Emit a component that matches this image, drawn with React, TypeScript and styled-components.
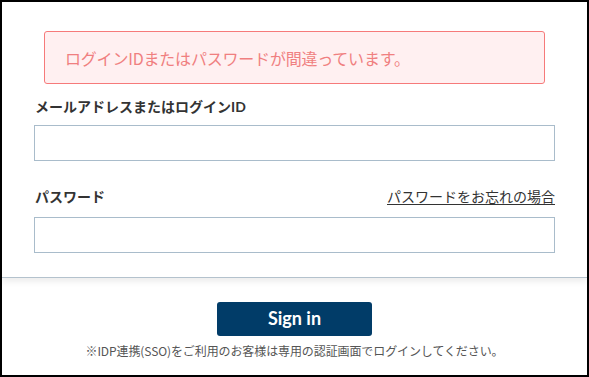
import React, { useState } from 'react';
import styled, { createGlobalStyle } from 'styled-components';

const GlobalStyle = createGlobalStyle`
  html, body {
    margin: 0;
    padding: 0;
    background: #ffffff;
  }
  body {
    font-family: Lato, "Noto Sans CJK JP", sans-serif;
    color: #333333;
  }
  * {
    box-sizing: border-box;
  }
`;

const Frame = styled.div`
  width: 589px;
  height: 377px;
  border: 2px solid #000000;
  display: flex;
  flex-direction: column;
  background: #ffffff;
  overflow: hidden;
`;

const FormSection = styled.section`
  padding: 29px 32px 24px 32px;
  border-bottom: 1px solid #b4c2cd;
  box-shadow: 0 4px 6px rgba(0, 0, 0, 0.07);
  position: relative;
  z-index: 1;
`;

const Alert = styled.div`
  margin: 0 10px;
  height: 53px;
  border: 1px solid #f67a7a;
  border-radius: 3px;
  background-color: #fff0f1;
  color: #f07f80;
  font-family: "Noto Sans CJK JP", sans-serif;
  font-size: 16px;
  display: flex;
  align-items: center;
  padding: 0 20px;
  letter-spacing: -0.2px;
`;

const LabelRow = styled.div<{ $top: number; $bottom: number }>`
  display: flex;
  justify-content: space-between;
  align-items: center;
  height: 20px;
  margin-top: ${(p) => p.$top}px;
  margin-bottom: ${(p) => p.$bottom}px;
`;

const Label = styled.label`
  font-family: Lato, "Noto Sans CJK JP", sans-serif;
  font-weight: 700;
  font-size: 14px;
  color: #333333;
  padding-left: 1px;
`;

const ForgotLink = styled.a`
  font-family: "Noto Sans CJK JP", sans-serif;
  font-size: 14px;
  color: #333333;
  text-decoration: underline;
  text-underline-offset: 2px;
`;

const Input = styled.input`
  display: block;
  width: 100%;
  height: 36px;
  border: 1px solid #a9bccb;
  border-radius: 0;
  padding: 0 10px;
  font-size: 14px;
  outline: none;
  background: #ffffff;
`;

const Footer = styled.footer`
  flex: 1;
  display: flex;
  flex-direction: column;
  align-items: center;
  padding-top: 24px;
`;

const SignInButton = styled.button`
  width: 155px;
  height: 34px;
  border: none;
  border-radius: 3px;
  background-color: #013c68;
  color: #ffffff;
  font-family: Lato, "Open Sans", sans-serif;
  font-weight: 700;
  font-size: 18px;
  cursor: pointer;
  display: flex;
  align-items: center;
  justify-content: center;
  padding: 0 0 2px 0;
`;

const Note = styled.p`
  margin: 5px 0 0 0;
  font-family: "Noto Sans CJK JP", sans-serif;
  font-size: 12px;
  line-height: 20px;
  color: #555555;
  letter-spacing: -0.1px;
`;

const App = () => {
  const [loginId, setLoginId] = useState('');
  const [password, setPassword] = useState('');

  return (
    <>
      <GlobalStyle />
      <Frame>
        <FormSection>
          <Alert>ログインIDまたはパスワードが間違っています。</Alert>
          <LabelRow $top={12} $bottom={9}>
            <Label htmlFor="login-id">メールアドレスまたはログインID</Label>
          </LabelRow>
          <Input
            id="login-id"
            value={loginId}
            onChange={(e) => setLoginId(e.target.value)}
          />
          <LabelRow $top={25} $bottom={11}>
            <Label htmlFor="password">パスワード</Label>
            <ForgotLink href="#">パスワードをお忘れの場合</ForgotLink>
          </LabelRow>
          <Input
            id="password"
            type="password"
            value={password}
            onChange={(e) => setPassword(e.target.value)}
          />
        </FormSection>
        <Footer>
          <SignInButton>Sign in</SignInButton>
          <Note>※IDP連携(SSO)をご利用のお客様は専用の認証画面でログインしてください。</Note>
        </Footer>
      </Frame>
    </>
  );
};

export default App;
